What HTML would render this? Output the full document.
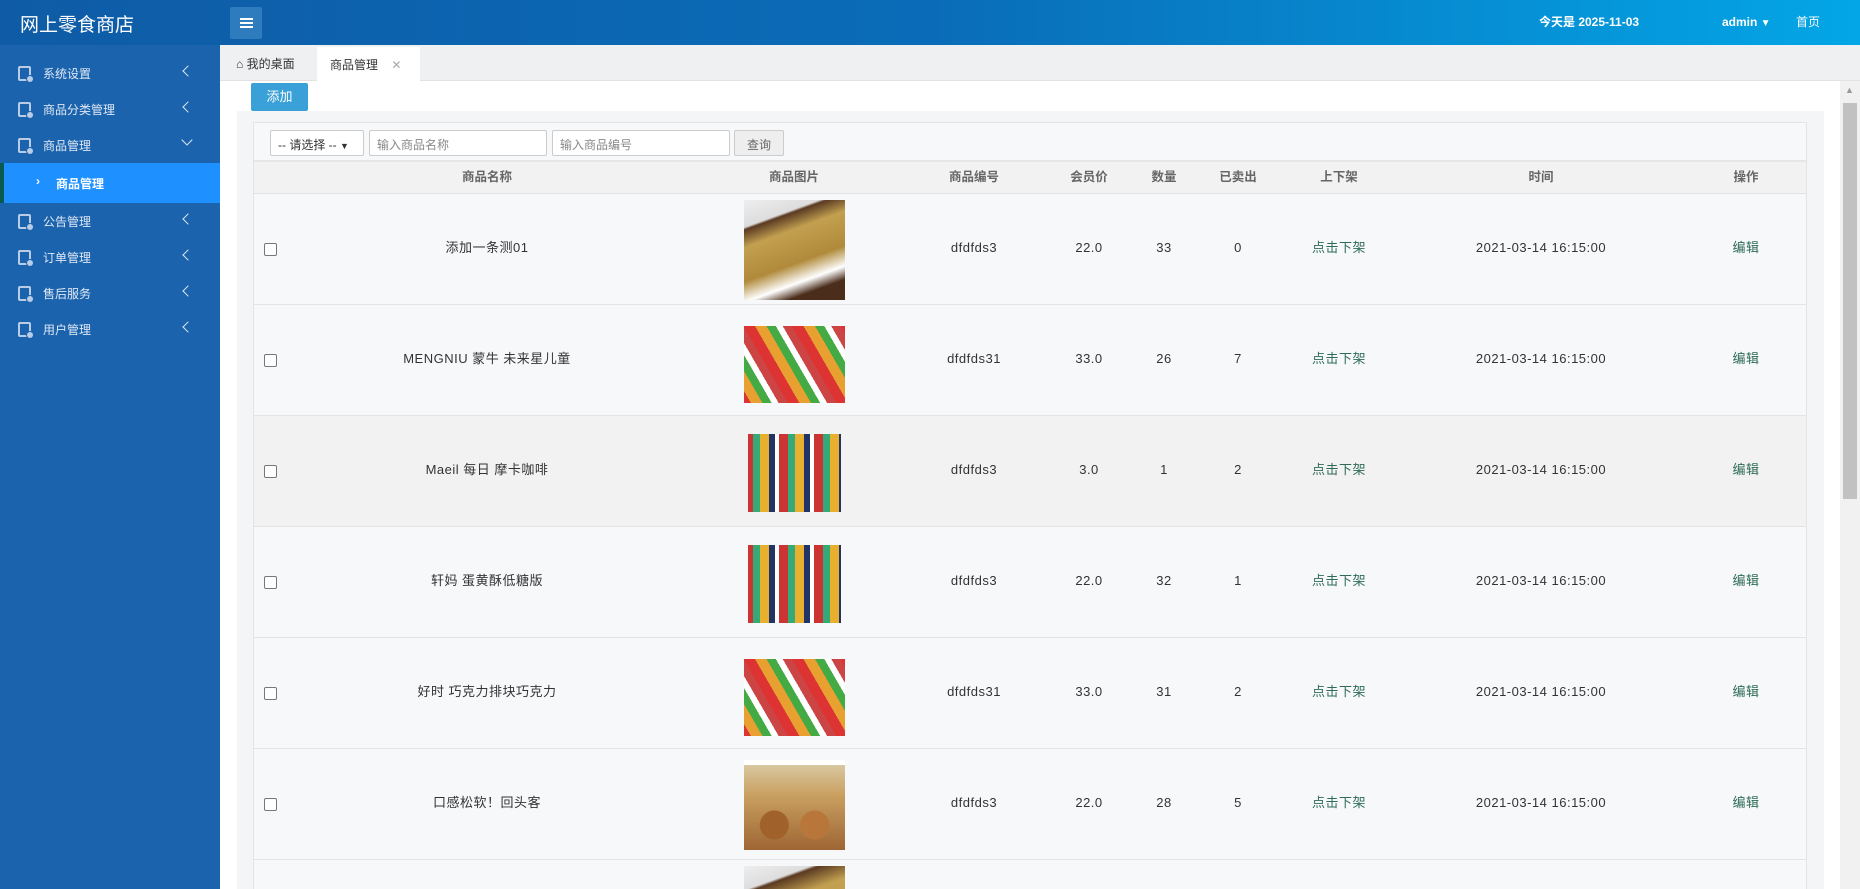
<!DOCTYPE html>
<html><head><meta charset="utf-8"><style>
*{margin:0;padding:0;box-sizing:border-box}
html,body{width:1860px;height:889px;overflow:hidden}
body{font-family:"Liberation Sans","Noto Sans CJK SC",sans-serif;background:#fff;position:relative;color:#333}
.hd{position:absolute;left:0;top:0;width:1860px;height:45px;background:linear-gradient(90deg,#0f5ba6 0%,#0a6cb8 50%,#03a6e6 100%)}
.logo{position:absolute;left:20px;top:10px;font-size:19px;color:#fff}
.tog{position:absolute;left:230px;top:7px;width:32px;height:32px;background:#2e7bbd;border-radius:2px}
.tog i{position:absolute;left:10px;width:13px;height:1.5px;background:#fff}
.hr{position:absolute;top:14px;font-size:12px;line-height:16px;color:#fff;font-weight:bold;white-space:nowrap}
.sb{position:absolute;left:0;top:45px;width:220px;height:844px;background:#1c63ae}
.mi{position:absolute;left:0;width:220px;height:36px;color:#dfe9f5;font-size:12px}
.mi .ic{position:absolute;left:18px;top:11px;width:13px;height:15px;border:2px solid #b9cde6;border-radius:2px}
.mi .ic:after{content:"";position:absolute;left:6px;top:7px;width:6px;height:6px;border-radius:50%;background:#b9cde6;border:1px solid #1c63ae}
.mi span{position:absolute;left:43px;top:10px}
.mi b{position:absolute;left:184px;top:12px;font-weight:normal;width:8px;height:8px;border-left:1.5px solid #dfe9f5;border-bottom:1.5px solid #dfe9f5;transform:rotate(45deg)}
.mi b.d{transform:rotate(-45deg);top:9px;left:183px}
.act{position:absolute;left:0;top:163px;width:220px;height:40px;background:#1e90ff;border-left:4px solid #0a5b4f;color:#fff;font-size:12px;font-weight:bold}
.tb{position:absolute;left:220px;top:45px;width:1640px;height:36px;background:#eff0f2;border-bottom:1px solid #e2e2e2}
.t1{position:absolute;left:0;top:0;width:97px;height:36px;font-size:12px;padding:10px 0 0 16px}
.t2{position:absolute;left:97px;top:2px;width:103px;height:35px;background:#fff;font-size:12px;padding:9px 0 0 13px}
.add{position:absolute;left:251px;top:83px;width:57px;height:28px;background:#3aa0d8;color:#fff;font-size:13px;text-align:center;line-height:28px;border-radius:2px}
.panel{position:absolute;left:237px;top:111px;width:1587px;height:778px;background:#f4f5f7}
.tbl{position:absolute;left:253px;top:122px;width:1554px;height:767px;border:1px solid #e4e4e4;border-bottom:none;background:#f7f8fa;overflow:hidden}
.srch{position:absolute;left:0;top:0;width:1552px;height:39px;border-bottom:2px solid #e6e6e6}
.inp{position:absolute;top:7px;height:26px;border:1px solid #ccc;background:#fff;font-size:12px;color:#888;padding:5px 7px;border-radius:2px}
.th{position:absolute;left:0;top:39px;width:1552px;height:32px;background:#f2f2f2;border-bottom:1px solid #e2e2e2;font-size:12.5px;font-weight:bold;color:#666}
.c{position:absolute;transform:translateX(-50%);white-space:nowrap;line-height:16px}
.row{position:absolute;left:0;width:1552px;height:111px;border-bottom:1px solid #e4e4e4;font-size:13px;letter-spacing:.5px;color:#333;overflow:hidden}
.row .c{top:46px}
.g{color:#2e6b55}
.cb{position:absolute;left:10px;top:49px;width:13px;height:13px;border:1px solid #777;border-radius:2px;background:#fff}
.img{position:absolute;left:490px;top:6px;width:101px;height:100px;background:#fff;overflow:hidden}
.sc{position:absolute;left:1840px;top:81px;width:20px;height:808px;background:#f1f1f1}
.sc i{position:absolute;left:3px;top:22px;width:14px;height:396px;background:#c1c1c1}
</style></head><body>
<div class="hd">
<div class="logo">网上零食商店</div>
<div class="tog"><i style="top:11px"></i><i style="top:15px"></i><i style="top:19px"></i></div>
<div class="hr" style="left:1539px">今天是 2025-11-03</div>
<div class="hr" style="left:1722px">admin <span style="font-size:10px;line-height:16px">▼</span></div>
<div class="hr" style="left:1796px;font-weight:normal">首页</div>
</div>
<div class="sb"></div>
<div class="mi" style="top:55px"><div class="ic"></div><span>系统设置</span><b></b></div>
<div class="mi" style="top:91px"><div class="ic"></div><span>商品分类管理</span><b></b></div>
<div class="mi" style="top:127px"><div class="ic"></div><span>商品管理</span><b class="d"></b></div>
<div class="act"><span style="position:absolute;left:32px;top:11px">›</span><span style="position:absolute;left:52px;top:12px">商品管理</span></div>
<div class="mi" style="top:203px"><div class="ic"></div><span>公告管理</span><b></b></div>
<div class="mi" style="top:239px"><div class="ic"></div><span>订单管理</span><b></b></div>
<div class="mi" style="top:275px"><div class="ic"></div><span>售后服务</span><b></b></div>
<div class="mi" style="top:311px"><div class="ic"></div><span>用户管理</span><b></b></div>
<div class="tb"><div class="t1">⌂ 我的桌面</div><div class="t2">商品管理 <span style="color:#aaa;margin-left:10px">✕</span></div></div>
<div class="add">添加</div>
<div class="panel"></div>
<div class="tbl">
<div class="srch">
<div class="inp" style="left:16px;width:94px;color:#333">-- 请选择 -- <span style="font-size:9px">▼</span></div>
<div class="inp" style="left:115px;width:178px">输入商品名称</div>
<div class="inp" style="left:298px;width:178px">输入商品编号</div>
<div class="inp" style="left:480px;width:50px;background:#eee;color:#666;text-align:center">查询</div>
</div>
<div class="th">
<span class="c" style="left:233px;top:7px">商品名称</span>
<span class="c" style="left:540px;top:7px">商品图片</span>
<span class="c" style="left:720px;top:7px">商品编号</span>
<span class="c" style="left:835px;top:7px">会员价</span>
<span class="c" style="left:910px;top:7px">数量</span>
<span class="c" style="left:984px;top:7px">已卖出</span>
<span class="c" style="left:1085px;top:7px">上下架</span>
<span class="c" style="left:1287px;top:7px">时间</span>
<span class="c" style="left:1492px;top:7px">操作</span>
</div>
<div class="row" style="top:71px"><div class="cb"></div><span class="c" style="left:233px">添加一条测01</span><div class="img" style="background:linear-gradient(160deg,#eee 0,#ddd 20%,#5a3a22 22%,#c2a050 35%,#b08a3a 60%,#fff 75%,#4a2d1a 85%)"></div><span class="c" style="left:720px">dfdfds3</span><span class="c" style="left:835px">22.0</span><span class="c" style="left:910px">33</span><span class="c" style="left:984px">0</span><span class="c g" style="left:1085px">点击下架</span><span class="c" style="left:1287px">2021-03-14 16:15:00</span><span class="c g" style="left:1492px">编辑</span></div>
<div class="row" style="top:182px"><div class="cb"></div><span class="c" style="left:233px">MENGNIU 蒙牛 未来星儿童</span><div class="img" style="background:repeating-linear-gradient(60deg,#d33 0 10px,#e8a030 10px 20px,#4a4 20px 28px,#fff 28px 34px,#c44 34px 42px);clip-path:inset(15% 0 8% 0)"></div><span class="c" style="left:720px">dfdfds31</span><span class="c" style="left:835px">33.0</span><span class="c" style="left:910px">26</span><span class="c" style="left:984px">7</span><span class="c g" style="left:1085px">点击下架</span><span class="c" style="left:1287px">2021-03-14 16:15:00</span><span class="c g" style="left:1492px">编辑</span></div>
<div class="row" style="top:293px;background:#f2f2f2"><div class="cb"></div><span class="c" style="left:233px">Maeil 每日 摩卡咖啡</span><div class="img" style="background:repeating-linear-gradient(90deg,#c33 0 9px,#3a7 9px 16px,#e9b030 16px 25px,#236 25px 31px,#fff 31px 35px);clip-path:inset(12% 4% 10% 4%)"></div><span class="c" style="left:720px">dfdfds3</span><span class="c" style="left:835px">3.0</span><span class="c" style="left:910px">1</span><span class="c" style="left:984px">2</span><span class="c g" style="left:1085px">点击下架</span><span class="c" style="left:1287px">2021-03-14 16:15:00</span><span class="c g" style="left:1492px">编辑</span></div>
<div class="row" style="top:404px"><div class="cb"></div><span class="c" style="left:233px">轩妈 蛋黄酥低糖版</span><div class="img" style="background:repeating-linear-gradient(90deg,#c33 0 9px,#3a7 9px 16px,#e9b030 16px 25px,#236 25px 31px,#fff 31px 35px);clip-path:inset(12% 4% 10% 4%)"></div><span class="c" style="left:720px">dfdfds3</span><span class="c" style="left:835px">22.0</span><span class="c" style="left:910px">32</span><span class="c" style="left:984px">1</span><span class="c g" style="left:1085px">点击下架</span><span class="c" style="left:1287px">2021-03-14 16:15:00</span><span class="c g" style="left:1492px">编辑</span></div>
<div class="row" style="top:515px"><div class="cb"></div><span class="c" style="left:233px">好时 巧克力排块巧克力</span><div class="img" style="background:repeating-linear-gradient(60deg,#d33 0 10px,#e8a030 10px 20px,#4a4 20px 28px,#fff 28px 34px,#c44 34px 42px);clip-path:inset(15% 0 8% 0)"></div><span class="c" style="left:720px">dfdfds31</span><span class="c" style="left:835px">33.0</span><span class="c" style="left:910px">31</span><span class="c" style="left:984px">2</span><span class="c g" style="left:1085px">点击下架</span><span class="c" style="left:1287px">2021-03-14 16:15:00</span><span class="c g" style="left:1492px">编辑</span></div>
<div class="row" style="top:626px"><div class="cb"></div><span class="c" style="left:233px">口感松软！回头客</span><div class="img" style="background:radial-gradient(circle at 30% 70%,#a0622a 0 14px,transparent 15px),radial-gradient(circle at 70% 70%,#b8763a 0 14px,transparent 15px),linear-gradient(180deg,#fff 10%,#d8c8a0 10%,#c9a060 40%,#9a6030 100%);clip-path:inset(5% 0 5% 0)"></div><span class="c" style="left:720px">dfdfds3</span><span class="c" style="left:835px">22.0</span><span class="c" style="left:910px">28</span><span class="c" style="left:984px">5</span><span class="c g" style="left:1085px">点击下架</span><span class="c" style="left:1287px">2021-03-14 16:15:00</span><span class="c g" style="left:1492px">编辑</span></div>
<div class="row" style="top:737px;height:30px;border-bottom:none"><div class="img" style="height:24px;background:linear-gradient(160deg,#eee 0,#ddd 40%,#5a3a22 45%,#c2a050 80%)"></div></div>
</div>
<div class="sc"><span style="position:absolute;left:5px;top:4px;font-size:9px;color:#999">▲</span><i></i></div>
</body></html>
